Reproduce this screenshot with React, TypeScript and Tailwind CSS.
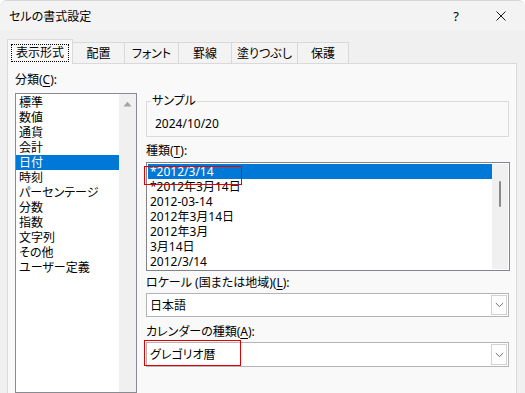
import React from "react";

const leftItems = [
  "標準",
  "数値",
  "通貨",
  "会計",
  "日付",
  "時刻",
  "パーセンテージ",
  "分数",
  "指数",
  "文字列",
  "その他",
  "ユーザー定義",
];

const typeItems = [
  "*2012/3/14",
  "*2012年3月14日",
  "2012-03-14",
  "2012年3月14日",
  "2012年3月",
  "3月14日",
  "2012/3/14",
];

function Chevron() {
  return (
    <svg width="9" height="6" viewBox="0 0 9 6" fill="none">
      <path d="M0.8 1 L4.5 4.6 L8.2 1" stroke="#6f6f6f" strokeWidth="1" />
    </svg>
  );
}

function Dropdown({ value, h }: { value: string; h: string }) {
  return (
    <div className={`relative flex ${h} w-[363px] border border-[#b4b4b4] bg-white`}>
      <div className="flex flex-1 items-center pl-[3px]">{value}</div>
      <div className="my-[1px] mr-[1px] flex w-[16px] items-center justify-center border border-[#d2d2d2] bg-[#fdfdfd]">
        <Chevron />
      </div>
    </div>
  );
}

export default function App() {
  return (
    <div className="flex h-[393px] w-[525px] flex-col overflow-hidden rounded-t-[7px] border-t border-[#d6d6d6] bg-[#f0f0f0] font-['Noto_Sans','Noto_Sans_CJK_JP',sans-serif] text-[12px] leading-[15px] text-black [font-feature-settings:'palt']">
      {/* Title bar */}
      <div className="flex h-[30px] items-center bg-[#f3f3f3] pl-[9px]">
        <span className="text-[12px]">セルの書式設定</span>
        <div className="ml-auto flex items-center pr-[19px]">
          <span className="w-[10px] text-center text-[13px]">?</span>
          <svg className="ml-[35px]" width="10" height="10" viewBox="0 0 10 10">
            <path d="M0.5 0.5 L9.5 9.5 M9.5 0.5 L0.5 9.5" stroke="#1a1a1a" strokeWidth="1" />
          </svg>
        </div>
      </div>

      {/* Tabs */}
      <div className="flex h-[32px] items-end pl-[7px]">
        <div className="relative z-10 -mb-[1px] flex h-[25px] w-[66px] items-center justify-center border border-b-0 border-[#d9d9d9] bg-[#f9f9f9]">
          <div className="absolute bottom-[2px] left-[3px] right-[3px] top-[4px] border border-dotted border-black" />
          <span className="relative">表示形式</span>
        </div>
        <div className="flex h-[21px] w-[52px] items-center justify-center border border-l-0 border-b-0 border-[#d9d9d9] bg-[#f3f3f3]">配置</div>
        <div className="flex h-[21px] w-[54px] items-center justify-center border border-l-0 border-b-0 border-[#d9d9d9] bg-[#f3f3f3]">フォント</div>
        <div className="flex h-[21px] w-[53px] items-center justify-center border border-l-0 border-b-0 border-[#d9d9d9] bg-[#f3f3f3]">罫線</div>
        <div className="flex h-[21px] w-[66px] items-center justify-center border border-l-0 border-b-0 border-[#d9d9d9] bg-[#f3f3f3]">塗りつぶし</div>
        <div className="flex h-[21px] w-[51px] items-center justify-center border border-l-0 border-b-0 border-[#d9d9d9] bg-[#f3f3f3]">保護</div>
      </div>

      {/* Panel */}
      <div className="ml-[7px] flex w-[510px] flex-1 border border-b-0 border-[#dadada] bg-[#f9f9f9]">
        {/* Left column */}
        <div className="ml-[7px] flex w-[122px] flex-col pt-[8px]">
          <div className="leading-[16px]">
            分類(<span className="underline underline-offset-2">C</span>):
          </div>
          <div className="mt-[5px] flex flex-1 border border-[#8a8a93] bg-white">
            <div className="w-[103px] pt-[1px]">
              {leftItems.map((it) => (
                <div
                  key={it}
                  className={`h-[15px] whitespace-nowrap pl-[3px] leading-[15px] ${
                    it === "日付" ? "bg-[#0078d7] text-white" : ""
                  }`}
                >
                  {it}
                </div>
              ))}
            </div>
            <div className="flex w-[17px] justify-center bg-[#f0f0f0] pt-[7px]">
              <svg width="9" height="6" viewBox="0 0 9 6">
                <path d="M0.5 5.5 L4.5 0.8 L8.5 5.5 Z" fill="#a3a3a3" />
              </svg>
            </div>
          </div>
        </div>

        {/* Right column */}
        <div className="ml-[9px] flex w-[364px] flex-col">
          <fieldset className="mt-[30px] w-[363px] border border-[#dadada] pb-[5px] pl-[4px]">
            <legend className="px-[1px] leading-[14px]">サンプル</legend>
            <div className="pl-[4px] pt-[8px] leading-[15px]">2024/10/20</div>
          </fieldset>

          <div className="mt-[6px] leading-[16px]">
            種類(<span className="underline underline-offset-2">T</span>):
          </div>
          <div className="relative mt-[3px] flex h-[109px] w-[364px] border border-[#84848c] bg-white p-[1px]">
            <div className="w-[344px]">
              {typeItems.map((it, i) => (
                <div
                  key={i}
                  className={`h-[15px] whitespace-nowrap pl-[2px] leading-[15px] ${
                    i === 0 ? "bg-[#0078d7] text-white" : ""
                  }`}
                >
                  {it}
                </div>
              ))}
            </div>
            <div className="flex w-[16px] justify-center bg-[#f0f0f0]">
              <div className="mt-[17px] h-[26px] w-[2px] rounded-full bg-[#8a8a8a]" />
            </div>
            <div className="absolute left-[-3px] top-[3px] h-[19px] w-[98px] border border-[#e00000]" />
          </div>

          <div className="mt-[4px] leading-[16px]">
            ロケール (国または地域)(<span className="underline underline-offset-2">L</span>):
          </div>
          <div className="mt-[2px]">
            <Dropdown value="日本語" h="h-[24px]" />
          </div>

          <div className="mt-[7px] leading-[16px]">
            カレンダーの種類(<span className="underline underline-offset-2">A</span>):
          </div>
          <div className="relative mt-[2px]">
            <Dropdown value="グレゴリオ暦" h="h-[25px]" />
            <div className="absolute left-[-2px] top-[-2px] h-[26px] w-[97px] border border-[#e00000]" />
          </div>
        </div>
      </div>
    </div>
  );
}
